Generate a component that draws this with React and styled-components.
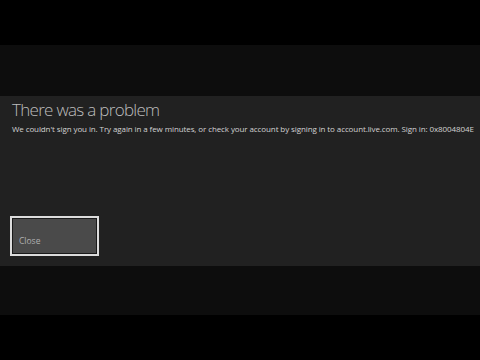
import React from 'react';
import styled, { createGlobalStyle } from 'styled-components';

const GlobalStyle = createGlobalStyle`
  html, body {
    margin: 0;
    padding: 0;
    background: #000;
  }
  body {
    font-family: "Open Sans", "Noto Sans", sans-serif;
  }
`;

const Screen = styled.div`
  width: 480px;
  height: 360px;
  display: flex;
  flex-direction: column;
  background: #000;
  overflow: hidden;
`;

const Letterbox = styled.div`
  height: ${p => p.h}px;
  background: #000;
  flex-shrink: 0;
`;

const Band = styled.div`
  height: ${p => p.h}px;
  background: #0d0d0d;
  flex-shrink: 0;
`;

const Panel = styled.section`
  height: 170px;
  flex-shrink: 0;
  background: #212121;
  box-sizing: border-box;
  padding: 0 0 10px 10px;
  display: flex;
  flex-direction: column;
`;

const Title = styled.h1`
  margin: 0;
  padding: 2px 0 0 2px;
  font-family: "Open Sans", "Noto Sans", sans-serif;
  font-weight: 300;
  font-size: 17px;
  line-height: 24px;
  color: #bdbdbd;
  letter-spacing: -0.7px;
`;

const Message = styled.p`
  margin: 1px 0 0 2px;
  font-size: 8px;
  line-height: 12px;
  color: #d2d2d2;
  white-space: nowrap;
  letter-spacing: -0.1px;
`;

const Actions = styled.div`
  margin-top: auto;
  display: flex;
`;

const Button = styled.button`
  width: 89px;
  height: 40px;
  box-sizing: border-box;
  border: 2px solid #dcdcdc;
  box-shadow: inset 0 0 0 1px #1a1a1a;
  background: #4a4a4a;
  color: #b0b0b0;
  font-family: "Open Sans", "Noto Sans", sans-serif;
  font-size: 8.5px;
  text-align: left;
  display: flex;
  align-items: flex-end;
  padding: 0 0 8px 7px;
  cursor: pointer;
`;

export default function App() {
  return (
    <>
      <GlobalStyle />
      <Screen>
        <Letterbox h={45} />
        <Band h={51} />
        <Panel>
          <Title>There was a problem</Title>
          <Message>
            We couldn't sign you in. Try again in a few minutes, or check your account by signing in to account.live.com. Sign in: 0x8004804E
          </Message>
          <Actions>
            <Button>Close</Button>
          </Actions>
        </Panel>
        <Band h={49} />
        <Letterbox h={45} />
      </Screen>
    </>
  );
}
